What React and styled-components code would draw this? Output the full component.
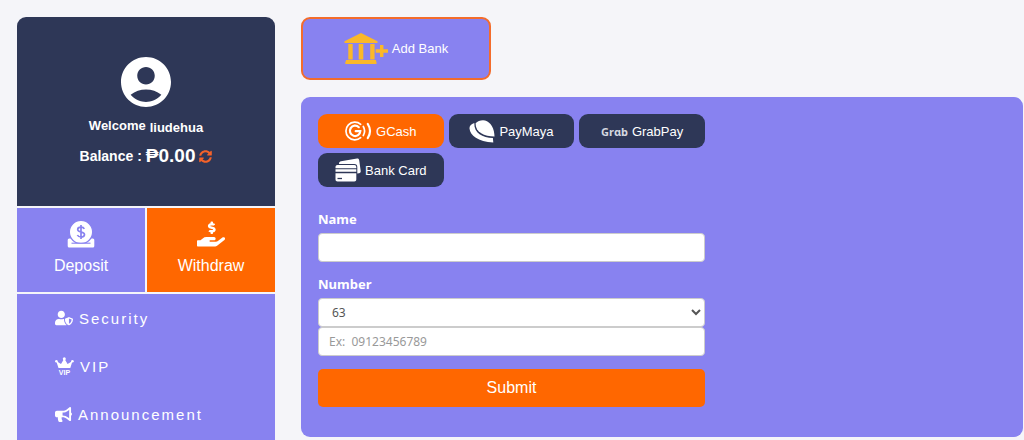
import React, { useState } from 'react';
import styled, { createGlobalStyle } from 'styled-components';
import { MdAccountCircle } from 'react-icons/md';
import { FaBullhorn, FaHandHoldingUsd, FaSyncAlt, FaUserShield } from 'react-icons/fa';

const GlobalStyle = createGlobalStyle`
  * {
    box-sizing: border-box;
  }

  body {
    margin: 0;
    background-color: #f5f5f9;
    font-family: 'Liberation Sans', Arial, sans-serif;
    font-size: 13px;
    color: white;
  }

  button,
  input,
  select {
    font-family: inherit;
  }
`;

const Page = styled.div`
  display: flex;
  gap: 26px;
  min-height: 100vh;
  padding: 17px 1px 0 17px;
`;

const Sidebar = styled.aside`
  flex: 0 0 258px;
  display: flex;
  flex-direction: column;
  gap: 2px;
`;

const Profile = styled.section`
  display: flex;
  flex-direction: column;
  align-items: center;
  padding: 35px 16px 36px;
  border-radius: 9px 9px 0 0;
  background-color: #2e3757;
  font-weight: bold;
`;

const Welcome = styled.div`
  display: flex;
  align-items: flex-end;
  gap: 4px;
  margin: 4px 0 6px;
  line-height: 20px;

  & .user-name {
    line-height: 16px;
  }
`;

const Balance = styled.div`
  display: flex;
  align-items: center;
  gap: 4px;
  font-size: 14px;
  line-height: 28px;

  & .amount {
    font-size: 19px;
  }
`;

const RefreshButton = styled.button`
  display: flex;
  padding: 0;
  border: none;
  background: none;
  color: #f4622a;
  font-size: 13px;
  cursor: pointer;
`;

const Wallet = styled.nav`
  display: grid;
  grid-template-columns: 1fr 1fr;
  gap: 2px;
`;

const WalletLink = styled.a`
  display: flex;
  flex-direction: column;
  align-items: center;
  gap: 8px;
  height: 84px;
  padding-top: 12px;
  background-color: ${({ $active }) => ($active ? '#ff6700' : '#8882f0')};
  color: white;
  font-size: 16px;
  line-height: 20px;
  text-decoration: none;
`;

const Menu = styled.nav`
  flex: 1;
  background-color: #8882f0;
`;

const MenuLink = styled.a`
  display: flex;
  align-items: center;
  gap: 6px;
  height: 48px;
  padding-left: 38px;
  color: white;
  font-size: 15px;
  letter-spacing: 2px;
  text-decoration: none;
`;

const Main = styled.main`
  flex: 1;
  display: flex;
  flex-direction: column;
  align-items: flex-start;
  gap: 17px;
`;

const AddBankButton = styled.button`
  display: flex;
  align-items: center;
  justify-content: center;
  gap: 4px;
  width: 190px;
  height: 63px;
  border: 2px solid #f36c2c;
  border-radius: 9px;
  background-color: #8882f0;
  color: white;
  font-size: 13px;
  cursor: pointer;
`;

const Panel = styled.section`
  width: 100%;
  padding: 17px 17px 30px;
  border-radius: 9px;
  background-color: #8882f0;
`;

const Methods = styled.div`
  display: grid;
  grid-template-columns: repeat(3, 1fr);
  gap: 5px;
  max-width: 387px;
  margin-bottom: 23px;
`;

const MethodButton = styled.button`
  display: flex;
  align-items: center;
  justify-content: center;
  gap: 4px;
  height: 34px;
  padding: 0;
  border: none;
  border-radius: 9px;
  background-color: ${({ $active }) => ($active ? '#ff6700' : '#2e3757')};
  color: white;
  font-size: 13px;
  cursor: pointer;
`;

const GrabMark = styled.span`
  font-family: 'Noto Sans', sans-serif;
  font-size: 11px;
  font-weight: bold;
  color: #d5d7e0;
`;

const Form = styled.form`
  display: flex;
  flex-direction: column;
  max-width: 387px;

  & label {
    margin-bottom: 5px;
    font-family: 'Noto Sans', sans-serif;
    font-size: 13px;
    font-weight: bold;
    line-height: 18px;
  }

  & input,
  & select {
    width: 100%;
    height: 29px;
    border: 1px solid #ccc;
    border-radius: 4px;
    background-color: white;
    color: #555;
    font-family: 'Noto Sans', sans-serif;
    font-size: 12px;
  }

  & input {
    padding: 0 10px;
  }

  & select {
    padding: 0 9px;
  }

  & input::placeholder {
    color: #999;
  }
`;

const Field = styled.div`
  display: flex;
  flex-direction: column;
  margin-bottom: 13px;
`;

const SubmitButton = styled.button`
  height: 38px;
  border: none;
  border-radius: 5px;
  background-color: #ff6700;
  color: white;
  font-size: 16px;
  cursor: pointer;
`;

const BankIcon = () => (
  <svg width="44" height="32" viewBox="0 0 44 32" fill="#fbb829" aria-hidden="true">
    <path d="M17 0 33.500 8.200V10H.5V8.200Z" />
    <path d="M4.300 11h4.400v15.500H4.300zM14.700 11h4.600v15.500h-4.600zM26.200 11h4.400v15.500h-4.400z" />
    <path d="M2 27h30v1.500h.5V31H1.300v-2.500H2z" />
    <path d="M36 12h3.400v4.300H44v3.400h-4.600V24H36v-4.300h-4.300v-3.400H36z" />
  </svg>
);

const DepositIcon = () => (
  <svg width="28" height="28" viewBox="0 0 28 28" aria-hidden="true">
    <rect x=".7" y="18.500" width="26.600" height="9" rx="1.500" fill="white" />
    <circle cx="14" cy="12" r="11.600" fill="white" stroke="#8882f0" strokeWidth="1.200" />
    <path d="M2 23.500h24V27H2z" fill="white" />
    <path d="M4.500 23.200h19" stroke="#8882f0" strokeWidth="1.100" />
    <path d="M17.300 8.800c-.6-1.200-1.800-1.700-3.300-1.700-2 0-3.300.9-3.300 2.400 0 3.400 6.800 1.500 6.800 5 0 1.500-1.400 2.500-3.500 2.500-1.700 0-3-.7-3.600-2M14 5v14" fill="none" stroke="#8882f0" strokeWidth="1.700" />
  </svg>
);

const VipIcon = () => (
  <svg width="19" height="18" viewBox="0 0 19 18" fill="white" aria-hidden="true">
    <path d="M1.200 4 6 7l3.300-5.500L12.600 7l4.900-3L15.300 11H3.500z" />
    <circle cx="1.400" cy="4.200" r="1.300" />
    <circle cx="9.300" cy="1.700" r="1.500" />
    <circle cx="17.400" cy="4.200" r="1.300" />
    <text x="9.500" y="17.500" textAnchor="middle" fontSize="7" fontWeight="bold" letterSpacing="0">VIP</text>
  </svg>
);

const GCashIcon = () => (
  <svg width="27" height="20" viewBox="0 0 27 20" fill="none" stroke="white" strokeWidth="1.700" strokeLinecap="round" aria-hidden="true">
    <path d="M15.700 3.300a8.900 8.900 0 1 0 0 13.400" />
    <path d="M13.800 6.200a5.200 5.200 0 1 0 1.500 4h-4.600" strokeWidth="2.200" />
    <path d="M18.300 5.500a9 9 0 0 1 0 9" />
    <path d="M22.800 3a13 13 0 0 1 0 14" strokeWidth="2.200" />
  </svg>
);

const PayMayaIcon = () => (
  <svg width="26" height="23" viewBox="0 0 26 23" fill="white" aria-hidden="true">
    <path d="M5.300 3C2 4 .3 6 .5 8.500 1 15.500 9 21.500 24.300 22.500l-.4-4.500C13.500 17.500 5 13.500 5.300 3z" />
    <path d="M6.600 3.200C8.500 1.300 11 .3 14 .3c5.500 0 10.500 5.500 11.300 13.700l.2 2.600C15.500 16.300 6.300 12.500 6.600 3.200z" />
  </svg>
);

const BankCardIcon = () => (
  <svg width="26" height="24" viewBox="0 0 26 24" fill="white" aria-hidden="true">
    <path d="M4 5.500C4 4 5 3.400 6 3.200L22 .6c1.200-.2 2 .5 2.200 1.700L25.700 13c.2 1.300-.5 2-1.700 2.300L22.300 15.600V9c0-2-1-3-3-3H4z" />
    <path d="M2.500 7h16.800c1.200 0 2 .8 2 2v1.200H.5V9c0-1.200.8-2 2-2zM.5 11.300h20.800v2.500H.5z" />
    <path d="M.5 15.200h20.800v6.300c0 1.200-.8 2-2 2H2.500c-1.200 0-2-.8-2-2z" />
    <path d="M2.500 20.500h4.500" stroke="#2e3757" strokeWidth="1.300" />
  </svg>
);

const methods = [
  { name: 'GCash', icon: <GCashIcon /> },
  { name: 'PayMaya', icon: <PayMayaIcon /> },
  { name: 'GrabPay', icon: <GrabMark aria-hidden="true">Grɑb</GrabMark> },
  { name: 'Bank Card', icon: <BankCardIcon /> },
];

const App = () => {
  const [method, setMethod] = useState('GCash');
  const [name, setName] = useState('');
  const [number, setNumber] = useState('');

  const handleSubmit = e => {
    e.preventDefault();
  };

  return (
    <>
      <GlobalStyle />
      <Page>
        <Sidebar>
          <Profile>
            <MdAccountCircle size={60} />
            <Welcome>
              <span>Welcome</span>
              <span className="user-name">liudehua</span>
            </Welcome>
            <Balance>
              <span>Balance :</span>
              <span className="amount">₱0.00</span>
              <RefreshButton type="button" aria-label="Refresh balance">
                <FaSyncAlt />
              </RefreshButton>
            </Balance>
          </Profile>
          <Wallet>
            <WalletLink href="#deposit">
              <DepositIcon />
              Deposit
            </WalletLink>
            <WalletLink href="#withdraw" $active>
              <FaHandHoldingUsd size={28} />
              Withdraw
            </WalletLink>
          </Wallet>
          <Menu>
            <MenuLink href="#security">
              <FaUserShield size={18} />
              Security
            </MenuLink>
            <MenuLink href="#vip">
              <VipIcon />
              VIP
            </MenuLink>
            <MenuLink href="#announcement">
              <FaBullhorn size={17} />
              Announcement
            </MenuLink>
          </Menu>
        </Sidebar>
        <Main>
          <AddBankButton type="button">
            <BankIcon />
            Add Bank
          </AddBankButton>
          <Panel>
            <Methods>
              {methods.map(item => (
                <MethodButton key={item.name} type="button" $active={item.name === method} onClick={() => setMethod(item.name)}>
                  {item.icon}
                  {item.name}
                </MethodButton>
              ))}
            </Methods>
            <Form onSubmit={handleSubmit}>
              <Field>
                <label htmlFor="name">Name</label>
                <input id="name" type="text" value={name} onChange={e => setName(e.target.value)} />
              </Field>
              <Field>
                <label htmlFor="number">Number</label>
                <select aria-label="Country code" defaultValue="63">
                  <option value="63">63</option>
                </select>
                <input id="number" type="tel" placeholder="Ex:  09123456789" value={number} onChange={e => setNumber(e.target.value)} />
              </Field>
              <SubmitButton type="submit">Submit</SubmitButton>
            </Form>
          </Panel>
        </Main>
      </Page>
    </>
  );
};

export default App;
